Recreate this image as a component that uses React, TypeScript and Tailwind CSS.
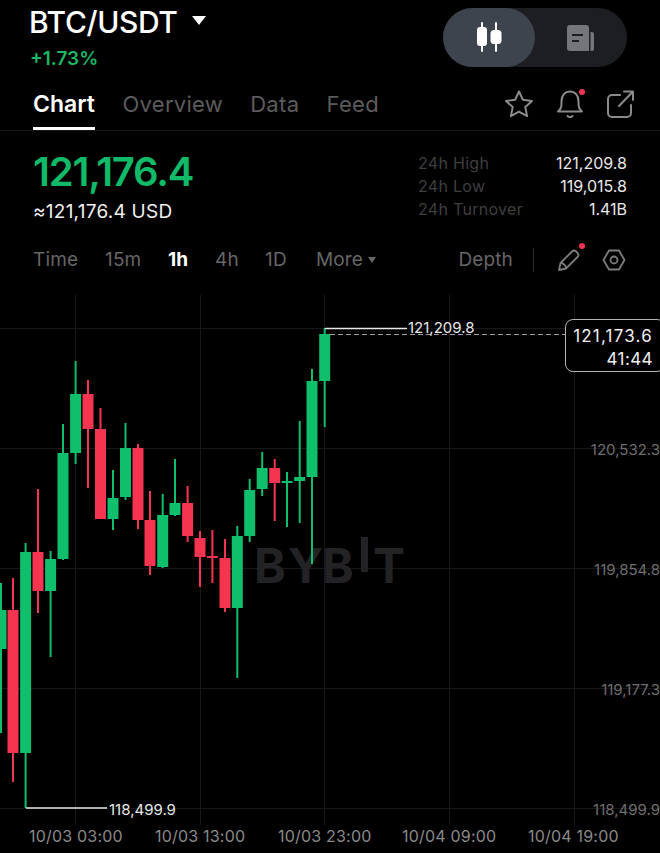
const GREEN = "#0fbf6b";
const RED = "#f5344f";

// x, wick top, body top, body bottom, wick bottom, up
const candles: [number, number, number, number, number, boolean][] = [
  [1, 583, 610, 649, 733, true],
  [13, 578, 610, 753, 782, false],
  [25.6, 543, 552, 753, 808, true],
  [38, 489, 552, 591, 613, false],
  [50.6, 551, 559, 591, 657, true],
  [63, 424, 453, 559, 560, true],
  [75.6, 361, 394, 453, 464, true],
  [88, 380, 394, 429, 488, false],
  [100.5, 408, 429, 519, 519, false],
  [113, 470, 498, 519, 530, true],
  [125.5, 423, 448, 497, 500, true],
  [138, 444, 448, 520, 529, false],
  [150, 491, 520, 566, 575, false],
  [162.7, 494, 515, 567, 568, true],
  [175, 459, 503, 515, 516, true],
  [187.6, 486, 503, 536, 542, false],
  [200, 531, 538, 557, 587, false],
  [212.4, 530, 556, 558, 583, false],
  [225, 539, 558, 608, 612, false],
  [237.3, 526, 536, 608, 678, true],
  [249.7, 479, 490, 536, 542, true],
  [262.2, 452, 468, 489, 496, true],
  [274.7, 459, 468, 483, 521, false],
  [287, 472, 481, 483, 527, true],
  [299.7, 421, 477, 481, 523, true],
  [312, 369, 381, 477, 564, true],
  [324.7, 328, 334, 381, 427, true],
];

const rightLabels = [
  { text: "120,532.3", className: "top-[148px]" },
  { text: "119,854.8", className: "top-[268px]" },
  { text: "119,177.3", className: "top-[388px]" },
  { text: "118,499.9", className: "top-[508px]" },
];

function ChartCanvas() {
  return (
    <svg viewBox="0 292 660 533" className="absolute inset-0 h-full w-full">
      {[328, 448, 568, 688, 808].map((y) => (
        <line key={y} x1="0" x2="660" y1={y + 0.5} y2={y + 0.5} stroke="#17181b" />
      ))}
      {[75, 200, 324, 449, 574].map((x) => (
        <line key={x} x1={x + 0.5} x2={x + 0.5} y1="295" y2="825" stroke="#17181b" />
      ))}

      <g fill="#232325" fontFamily="Inter, sans-serif" fontWeight="700" fontSize="48">
        <text x="254" y="583">B</text>
        <text x="288" y="583">Y</text>
        <text x="322" y="583">B</text>
        <rect x="361" y="537" width="7" height="35" />
        <text x="373" y="583">T</text>
      </g>

      {candles.map(([x, top, bodyTop, bodyBottom, bottom, up]) => (
        <g key={x} fill={up ? GREEN : RED}>
          <rect x={x - 1} y={top} width="2" height={bottom - top} />
          <rect x={x - 5.5} y={bodyTop} width="11" height={bodyBottom - bodyTop} />
        </g>
      ))}

      <path d="M325 328.5H407" stroke="#e8e8e8" strokeWidth="1.5" />
      <path d="M26 808H107" stroke="#e8e8e8" strokeWidth="1.5" />
      <path d="M330 334.5H565" stroke="#a0a0a0" strokeWidth="1" strokeDasharray="5 3" />
    </svg>
  );
}

function CandleIcon() {
  return (
    <svg width="28" height="32" viewBox="0 0 28 32" fill="#fff">
      <rect x="6" y="0" width="2" height="30" rx="1" />
      <rect x="2" y="5" width="10" height="19" rx="3" />
      <rect x="20" y="0" width="2" height="30" rx="1" />
      <rect x="15.5" y="8" width="11" height="14" rx="3.5" />
    </svg>
  );
}

function DocIcon() {
  return (
    <svg width="27" height="26" viewBox="0 0 27 26">
      <path d="M3 0h16a3 3 0 0 1 3 3v23H3a3 3 0 0 1-3-3V3a3 3 0 0 1 3-3z" fill="#757679" />
      <path d="M23.500 7H25a2 2 0 0 1 2 2v15a2 2 0 0 1-2 2h-1.500z" fill="#757679" />
      <path d="M5 10h11M5 16h7" stroke="#1c1e22" strokeWidth="2" />
    </svg>
  );
}

function StarIcon() {
  return (
    <svg width="30" height="30" viewBox="0 0 30 30" fill="none" stroke="#8b8b8b" strokeWidth="2" strokeLinejoin="round">
      <path d="M15 2.500l3.900 8.300 9.100 1.100-6.700 6.200 1.800 9-8.100-4.500-8.100 4.500 1.800-9L2 11.900l9.100-1.100z" />
    </svg>
  );
}

function BellIcon() {
  return (
    <div className="relative h-[30px] w-[30px]">
      <svg width="30" height="32" viewBox="0 0 30 32" fill="none" stroke="#8b8b8b" strokeWidth="2" strokeLinecap="round" strokeLinejoin="round">
        <path d="M3 22.500c2.500-2 3.500-4 3.500-7.500v-3C6.500 6.500 10 2.500 15 2.500s8.500 4 8.500 9.500v3c0 3.500 1 5.500 3.500 7.500z" />
        <path d="M12.500 27c1.500 1.500 3.500 1.500 5 0" />
      </svg>
      <span className="absolute right-0 top-0 h-[6px] w-[6px] rounded-full bg-[#f5344f]" />
    </div>
  );
}

function ShareIcon() {
  return (
    <svg width="30" height="30" viewBox="0 0 30 30" fill="none" stroke="#8b8b8b" strokeWidth="2" strokeLinecap="round" strokeLinejoin="round">
      <path d="M14 6H6a4 4 0 0 0-4 4v14a4 4 0 0 0 4 4h15a4 4 0 0 0 4-4v-8" />
      <path d="M13 17L27 2.500M18 2.500h9v8.500" />
    </svg>
  );
}

function PencilIcon() {
  return (
    <div className="relative h-[24px] w-[24px]">
      <svg width="24" height="24" viewBox="0 0 24 24" fill="none" stroke="#7d7d7d" strokeWidth="1.800" strokeLinejoin="round">
        <path d="M2 22l1.500-7L15 3.500a3 3 0 0 1 4.200 0l1.300 1.300a3 3 0 0 1 0 4.200L9 20.500z" />
        <path d="M3.500 15c3 0 5.500 2.500 5.500 5.500" />
      </svg>
      <span className="absolute -right-[4px] -top-[5px] h-[6px] w-[6px] rounded-full bg-[#f5344f]" />
    </div>
  );
}

function HexIcon() {
  return (
    <svg width="24" height="22" viewBox="0 0 24 22" fill="none" stroke="#7d7d7d" strokeWidth="1.800" strokeLinejoin="round">
      <path d="M1.500 11L7 1.500h10L22.500 11 17 20.500H7z" />
      <circle cx="12" cy="11" r="3.500" />
    </svg>
  );
}

export default function App() {
  return (
    <div className="relative h-[853px] w-[660px] overflow-hidden bg-black font-['Inter',sans-serif] text-white">
      {/* top bar */}
      <div className="flex items-start justify-between pl-[29px] pr-[33px] pt-2">
        <div>
          <div className="-mt-[2px] flex items-center gap-[14px]">
            <span className="text-[30px] font-medium leading-[32px] tracking-[-0.4px]">BTC/USDT</span>
            <span className="mb-[3px] h-0 w-0 border-x-[7px] border-t-[9px] border-x-transparent border-t-white" />
          </div>
          <div className="mt-[5px] pl-[1px] text-[19px] font-semibold leading-[32px] text-[#1fb767]">+1.73%</div>
        </div>
        <div className="flex h-[59px] w-[184px] rounded-full bg-[#1c1e22]">
          <div className="flex w-[92px] items-center justify-center rounded-full bg-[#3e444d]">
            <CandleIcon />
          </div>
          <div className="flex flex-1 items-center justify-center pr-[2px]">
            <DocIcon />
          </div>
        </div>
      </div>

      {/* tabs */}
      <div className="mt-[1px] flex h-[55px] items-start justify-between border-b border-[#14161a] pl-[33px] pr-[24px] pt-[9px]">
        <div className="flex gap-[27px] text-[22px] leading-[38px] text-[#5c5c5c]">
          <div className="h-[45px] border-b-[3px] border-white text-[23px] font-semibold text-white">Chart</div>
          <div className="ml-[0.5px] tracking-[0.3px]">Overview</div>
          <div className="tracking-[0.35px]">Data</div>
          <div className="tracking-[0.35px]">Feed</div>
        </div>
        <div className="mt-[4px] flex items-start gap-[21px]">
          <StarIcon />
          <BellIcon />
          <ShareIcon />
        </div>
      </div>

      {/* price + 24h stats */}
      <div className="flex items-start justify-between pl-[33px] pr-[33px] pt-[17px]">
        <div>
          <div className="text-[40px] font-semibold leading-[48px] tracking-[-1.2px] text-[#10ba68]">121,176.4</div>
          <div className="mt-[3px] text-[19px] leading-[26px] tracking-[0.25px] text-[#f0f0f0]">≈121,176.4 USD</div>
        </div>
        <div className="mt-[4px] w-[209px] text-[16px] leading-[23px]">
          <div className="flex justify-between">
            <span className="tracking-[0.3px] text-[#3f3f3f]">24h High</span>
            <span className="text-[#e8e8e8]">121,209.8</span>
          </div>
          <div className="flex justify-between">
            <span className="tracking-[0.3px] text-[#3f3f3f]">24h Low</span>
            <span className="text-[#e8e8e8]">119,015.8</span>
          </div>
          <div className="flex justify-between">
            <span className="tracking-[0.3px] text-[#3f3f3f]">24h Turnover</span>
            <span className="text-[#e8e8e8]">1.41B</span>
          </div>
        </div>
      </div>

      {/* timeframe bar */}
      <div className="mt-[19px] flex h-[32px] items-center pl-[33px] pr-[34px] text-[19px] tracking-[0.15px] text-[#666666]">
        <span className="w-[72px]">Time</span>
        <span className="w-[63px]">15m</span>
        <span className="w-[47px] font-bold text-white">1h</span>
        <span className="w-[50px]">4h</span>
        <span className="w-[51px]">1D</span>
        <span>More</span>
        <span className="ml-[5px] h-0 w-0 border-x-[4px] border-t-[6px] border-x-transparent border-t-[#666666]" />
        <span className="ml-auto">Depth</span>
        <span className="ml-[20px] h-[24px] w-px bg-[#2a2a2a]" />
        <span className="ml-[23px]"><PencilIcon /></span>
        <span className="ml-[21px]"><HexIcon /></span>
      </div>

      {/* chart */}
      <div className="relative mt-[16px] h-[533px] w-[660px]">
        <ChartCanvas />
        <span className="absolute left-[408px] top-[27px] text-[15px] leading-[18px] text-[#e8e8e8]">121,209.8</span>
        <span className="absolute left-[109px] top-[509px] text-[15px] leading-[18px] text-[#e8e8e8]">118,499.9</span>
        <div className="absolute left-[565px] top-[27px] flex h-[53px] w-[100px] flex-col items-end justify-center rounded-[8px] border border-[#b5b5b5] bg-black pr-[11px] pt-[4px] text-[17px] leading-[23px] text-[#efefef]">
          <span className="tracking-[1.2px]">121,173.6</span>
          <span className="tracking-[0.4px]">41:44</span>
        </div>
        {rightLabels.map((label) => (
          <span key={label.text} className={`absolute right-0 text-[15px] leading-[20px] text-[#6e6e6e] ${label.className}`}>
            {label.text}
          </span>
        ))}
      </div>

      {/* time axis */}
      <div className="flex h-[28px] items-start pl-[29px] pt-[1px] text-[16px] leading-[20px] tracking-[0.2px] text-[#8a8a8a]">
        <span className="w-[126px]">10/03 03:00</span>
        <span className="w-[123px]">10/03 13:00</span>
        <span className="w-[124px]">10/03 23:00</span>
        <span className="w-[126px]">10/04 09:00</span>
        <span>10/04 19:00</span>
      </div>
    </div>
  );
}
